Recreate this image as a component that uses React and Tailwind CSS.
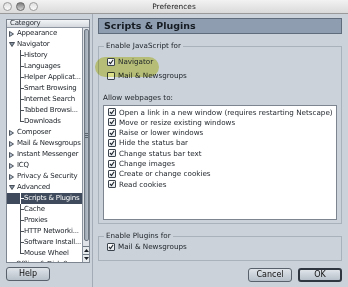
const treeItems = [
  { label: 'Appearance', type: 'closed' },
  { label: 'Navigator', type: 'open' },
  { label: 'History', type: 'child' },
  { label: 'Languages', type: 'child' },
  { label: 'Helper Applicat...', type: 'child' },
  { label: 'Smart Browsing', type: 'child' },
  { label: 'Internet Search', type: 'child' },
  { label: 'Tabbed Browsi...', type: 'child' },
  { label: 'Downloads', type: 'last' },
  { label: 'Composer', type: 'closed' },
  { label: 'Mail & Newsgroups', type: 'closed' },
  { label: 'Instant Messenger', type: 'closed' },
  { label: 'ICQ', type: 'closed' },
  { label: 'Privacy & Security', type: 'closed' },
  { label: 'Advanced', type: 'open' },
  { label: 'Scripts & Plugins', type: 'child', selected: true },
  { label: 'Cache', type: 'child' },
  { label: 'Proxies', type: 'child' },
  { label: 'HTTP Networki...', type: 'child' },
  { label: 'Software Install...', type: 'child' },
  { label: 'Mouse Wheel', type: 'last' },
  { label: 'Offline & Disk Space', type: 'closed' },
];

const allowItems = [
  'Open a link in a new window (requires restarting Netscape)',
  'Move or resize existing windows',
  'Raise or lower windows',
  'Hide the status bar',
  'Change status bar text',
  'Change images',
  'Create or change cookies',
  'Read cookies',
];

function Twisty({ open }) {
  return open ? (
    <svg width="6" height="5" viewBox="0 0 6 5" className="shrink-0">
      <path d="M0.5 0.5 H5.5 L3 4.5 Z" fill="#8a96a6" stroke="#2a313a" strokeWidth="0.8" />
    </svg>
  ) : (
    <svg width="5" height="6" viewBox="0 0 5 6" className="shrink-0">
      <path d="M0.5 0.5 V5.5 L4.5 3 Z" fill="#b9c4d2" stroke="#2a313a" strokeWidth="0.8" />
    </svg>
  );
}

function TreeRow({ item }) {
  const line = item.selected ? 'border-white' : 'border-[#4a4f55]';
  return (
    <div
      className={`flex h-[11px] shrink-0 items-center overflow-hidden whitespace-nowrap ${
        item.selected ? 'bg-[#3f4b5c] text-white' : 'text-[#1c2127]'
      }`}
    >
      {item.type === 'closed' || item.type === 'open' ? (
        <>
          <span className="ml-[2px] mr-[2px] flex w-[6px] items-center">
            <Twisty open={item.type === 'open'} />
          </span>
          <span>{item.label}</span>
        </>
      ) : (
        <>
          <span className="ml-[13px] flex h-full w-[4px] shrink-0 flex-col">
            <span className={`h-1/2 border-b border-l ${line}`} />
            {item.type === 'child' && <span className={`h-1/2 border-l ${line}`} />}
          </span>
          <span>{item.label}</span>
        </>
      )}
    </div>
  );
}

function Checkbox({ checked }) {
  return (
    <span className="flex h-[8px] w-[8px] shrink-0 items-center justify-center rounded-[1px] border border-[#3b434c] bg-gradient-to-b from-white to-[#e4e8ec]">
      {checked && (
        <svg width="6" height="6" viewBox="0 0 6 6">
          <path d="M1 3 L2.5 4.6 L5.2 0.8" fill="none" stroke="#1e252c" strokeWidth="1.1" />
        </svg>
      )}
    </span>
  );
}

function CheckRow({ label, checked, className = '' }) {
  return (
    <div className={`flex items-center gap-[3px] whitespace-nowrap ${className}`}>
      <Checkbox checked={checked} />
      <span>{label}</span>
    </div>
  );
}

function Button({ children, isDefault, className = '' }) {
  return (
    <button
      className={`flex h-[14px] items-center justify-center rounded-[3px] bg-gradient-to-b from-[#dfe4e9] to-[#b7c0ca] text-[#111] ${
        isDefault ? 'border-2 border-[#2f3640]' : 'border border-[#59626c]'
      } ${className}`}
    >
      {children}
    </button>
  );
}

export default function App() {
  return (
    <div className="flex h-[287px] w-[348px] flex-col overflow-hidden bg-[#cbd2d9] font-['DejaVu_Sans',sans-serif] text-[7.2px] leading-none text-[#1c2127]">
      {/* title bar */}
      <div className="relative flex h-[14px] shrink-0 items-center border-b border-[#9a9a9a] bg-gradient-to-b from-[#f2f2f2] to-[#dadada]">
        <div className="ml-[3px] flex items-center gap-[4px]">
          <span className="h-[9px] w-[9px] rounded-full border border-[#9a9a9a] bg-gradient-to-b from-[#e0e0e0] to-[#fafafa]" />
          <span className="h-[9px] w-[9px] rounded-full border border-[#6a6a6a] bg-gradient-to-b from-[#7d7d7d] to-[#d6d6d6]" />
          <span className="h-[9px] w-[9px] rounded-full border border-[#9a9a9a] bg-gradient-to-b from-[#e0e0e0] to-[#fafafa]" />
        </div>
        <span className="flex-1 pr-[38px] text-center text-[7.4px] text-[#222]">Preferences</span>
      </div>

      <div className="flex flex-1">
        {/* left column */}
        <div className="ml-[6px] mt-[5px] flex w-[84px] flex-col text-[7px] tracking-[-0.2px]">
          <div className="flex h-[244px] flex-col overflow-hidden border border-[#7d8690] bg-white">
            <div className="flex h-[8px] shrink-0 items-center border-b border-[#8d96a0] bg-gradient-to-b from-[#f3f5f7] to-[#d4d9de] pl-[3px] text-[#2a3038]">
              Category
            </div>
            <div className="flex flex-1 overflow-hidden">
              <div className="flex w-[75px] flex-col">
                {treeItems.map((item) => (
                  <TreeRow key={item.label} item={item} />
                ))}
              </div>
              <div className="flex w-[8px] flex-col border-l border-[#8a939d] bg-[#dfe3e7]">
                <div className="mx-[1px] mt-[1px] flex h-[212px] items-center justify-center rounded-[2px] border border-[#6e7883] bg-gradient-to-r from-[#9aa5b1] to-[#b7c0ca]">
                  <div className="flex w-[4px] flex-col gap-[1px]">
                    <span className="h-px bg-[#5d6772]" />
                    <span className="h-px bg-[#5d6772]" />
                    <span className="h-px bg-[#5d6772]" />
                  </div>
                </div>
                <div className="flex-1" />
                <div className="flex h-[8px] items-center justify-center border-t border-[#6e7883] bg-[#e8ebee]">
                  <svg width="5" height="3" viewBox="0 0 5 3">
                    <path d="M0 3 L2.5 0 L5 3 Z" fill="#1c2127" />
                  </svg>
                </div>
                <div className="flex h-[8px] items-center justify-center border-t border-[#6e7883] bg-[#e8ebee]">
                  <svg width="5" height="3" viewBox="0 0 5 3">
                    <path d="M0 0 L2.5 3 L5 0 Z" fill="#1c2127" />
                  </svg>
                </div>
              </div>
            </div>
          </div>
          <Button className="mt-[4px] w-[44px] text-[8px] tracking-normal">Help</Button>
        </div>

        {/* splitter */}
        <div className="ml-[2px] mr-[5px] w-px bg-[#a3acb6]" />

        {/* right column */}
        <div className="mt-[4px] flex w-[244px] flex-col">
          <div className="flex h-[16px] shrink-0 items-center border border-[#5f6c7b] bg-[#8e9daf] pl-[5px] text-[9.5px] font-bold text-[#151b22]">
            Scripts &amp; Plugins
          </div>

          <fieldset className="relative mt-[7px] h-[183px] border border-[#a9b1ba] px-[4px]">
            <legend className="ml-[1px] h-[10px] px-[2px] leading-[10px]">Enable JavaScript for</legend>
            <span className="absolute left-[-4px] top-[6px] h-[20px] w-[64px] rounded-full bg-[#e3e68c] mix-blend-multiply" />
            <CheckRow label="Navigator" checked className="relative ml-[4px] mt-[6px] h-[10px]" />
            <CheckRow label="Mail & Newsgroups" className="ml-[4px] mt-[4px] h-[10px]" />
            <div className="mt-[12px] h-[10px] leading-[10px]">Allow webpages to:</div>
            <div className="mt-[2px] h-[115px] border border-[#7d8690] bg-white pl-[4px] pt-px">
              {allowItems.map((label) => (
                <CheckRow key={label} label={label} checked className="h-[10.3px]" />
              ))}
            </div>
          </fieldset>

          <fieldset className="mt-[7px] h-[30px] border border-[#a9b1ba] px-[4px]">
            <legend className="ml-[1px] h-[10px] px-[2px] leading-[10px]">Enable Plugins for</legend>
            <CheckRow label="Mail & Newsgroups" checked className="ml-[4px] mt-[1px] h-[10px]" />
          </fieldset>

          <div className="mt-[7px] flex justify-end gap-[6px]">
            <Button className="w-[44px] text-[8px]">Cancel</Button>
            <Button isDefault className="w-[44px] text-[8px]">OK</Button>
          </div>
        </div>
      </div>
    </div>
  );
}
